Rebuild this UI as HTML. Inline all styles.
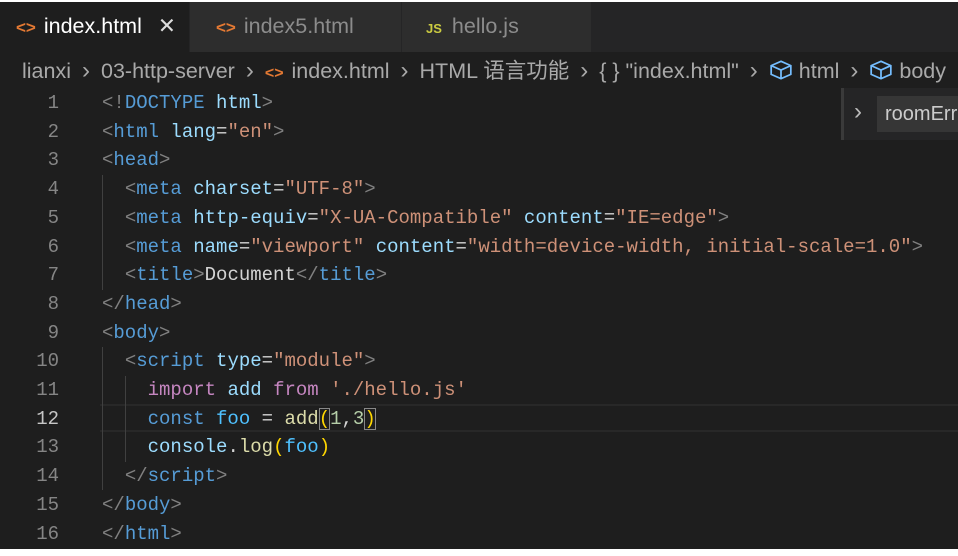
<!DOCTYPE html>
<html><head><style>
body{margin:0;width:958px;height:556px;background:#fff;overflow:hidden;position:relative;font-family:"Liberation Sans","Noto Sans CJK SC",sans-serif}
#ed{position:absolute;left:0;top:2px;width:958px;height:547px;background:#1e1e1e}
.tabs{position:absolute;top:0;left:0;width:958px;height:50px;background:#252526}
.tab{position:absolute;top:0;height:50px;line-height:48px;font-size:21.5px;color:#8c8c8c;background:#2d2d2d;border-right:1px solid #252526;box-sizing:border-box;white-space:nowrap}
.tab.a{background:#1e1e1e;color:#fff}
.ic{color:#e37933;font-size:17px;font-weight:bold;margin-right:8px}
.js{color:#cbcb41;font-size:13px;font-weight:bold;margin-right:10px}
.bc{position:absolute;top:52px;left:22px;font-size:21.5px;color:#a9a9a9;white-space:nowrap}
.bc .s{color:#a9a9a9;margin:0 11px 0 11px;font-size:24px}
.code{position:absolute;left:0;top:87px;font-family:"Liberation Mono",monospace;font-size:19px}
.ln{position:absolute;left:0;width:59px;text-align:right;color:#858585;height:28.7px;line-height:28.7px}
.cl{position:absolute;left:102px;white-space:pre;color:#d4d4d4;height:28.7px;line-height:28.7px}
.t{color:#808080}.n{color:#569cd6}.at{color:#9cdcfe}.st{color:#ce9178}.k{color:#c586c0}.v{color:#9cdcfe}.f{color:#dcdcaa}.num{color:#b5cea8}.b{color:#ffd700}
.g{position:absolute;width:1px;background:#404040}
</style></head><body><div id="ed">
<div class="tabs">
<div class="tab a" style="left:0;width:190px;padding-left:16px"><span class="ic">&lt;&gt;</span>index.html <span style="margin-left:10px;color:#ddd">✕</span></div>
<div class="tab" style="left:190px;width:212px;padding-left:26px"><span class="ic">&lt;&gt;</span>index5.html</div>
<div class="tab" style="left:402px;width:190px;padding-left:24px"><span class="js">JS</span>hello.js</div>
</div>
<div class="bc">lianxi<span class="s">›</span>03-http-server<span class="s">›</span><span class="ic" style="font-size:16px">&lt;&gt;</span>index.html<span class="s">›</span>HTML 语言功能<span class="s">›</span>{ } "index.html"<span class="s">›</span><svg width="24" height="22" viewBox="0 0 22 20" style="vertical-align:-3px"><path d="M11 2 L20 6 L20 14 L11 18 L2 14 L2 6 Z M2 6 L11 10 L20 6 M11 10 L11 18" fill="none" stroke="#75beff" stroke-width="1.6"/></svg> html<span class="s">›</span><svg width="24" height="22" viewBox="0 0 22 20" style="vertical-align:-3px"><path d="M11 2 L20 6 L20 14 L11 18 L2 14 L2 6 Z M2 6 L11 10 L20 6 M11 10 L11 18" fill="none" stroke="#75beff" stroke-width="1.6"/></svg> body</div>
<div style="position:absolute;left:841px;top:86px;width:117px;height:52px;background:#252526;border-left:3px solid #3a3a3a;box-sizing:border-box">
<span style="position:absolute;left:10px;top:10px;color:#bbb;font-size:24px">›</span>
<div style="position:absolute;left:33px;top:8px;width:90px;height:36px;background:#363636;color:#ccc;font-size:20px;line-height:36px;padding-left:8px">roomErr</div></div>
<div class="code">
<div style="position:absolute;left:100px;top:315px;width:858px;height:28px;border-top:2px solid #282828;border-bottom:2px solid #282828;box-sizing:border-box"></div>
<div class="g" style="left:102px;top:86px;height:115px"></div>
<div class="g" style="left:102px;top:258px;height:143px"></div>
<div class="g" style="left:125px;top:287px;height:86px"></div>
<div class="ln" style="top:0">1</div><div class="cl" style="top:0"><span class="t">&lt;!</span><span class="n">DOCTYPE</span> <span class="at">html</span><span class="t">&gt;</span></div>
<div class="ln" style="top:28.7px">2</div><div class="cl" style="top:28.7px"><span class="t">&lt;</span><span class="n">html</span> <span class="at">lang</span>=<span class="st">"en"</span><span class="t">&gt;</span></div>
<div class="ln" style="top:57.4px">3</div><div class="cl" style="top:57.4px"><span class="t">&lt;</span><span class="n">head</span><span class="t">&gt;</span></div>
<div class="ln" style="top:86.1px">4</div><div class="cl" style="top:86.1px">  <span class="t">&lt;</span><span class="n">meta</span> <span class="at">charset</span>=<span class="st">"UTF-8"</span><span class="t">&gt;</span></div>
<div class="ln" style="top:114.8px">5</div><div class="cl" style="top:114.8px">  <span class="t">&lt;</span><span class="n">meta</span> <span class="at">http-equiv</span>=<span class="st">"X-UA-Compatible"</span> <span class="at">content</span>=<span class="st">"IE=edge"</span><span class="t">&gt;</span></div>
<div class="ln" style="top:143.5px">6</div><div class="cl" style="top:143.5px">  <span class="t">&lt;</span><span class="n">meta</span> <span class="at">name</span>=<span class="st">"viewport"</span> <span class="at">content</span>=<span class="st">"width=device-width, initial-scale=1.0"</span><span class="t">&gt;</span></div>
<div class="ln" style="top:172.2px">7</div><div class="cl" style="top:172.2px">  <span class="t">&lt;</span><span class="n">title</span><span class="t">&gt;</span>Document<span class="t">&lt;/</span><span class="n">title</span><span class="t">&gt;</span></div>
<div class="ln" style="top:200.9px">8</div><div class="cl" style="top:200.9px"><span class="t">&lt;/</span><span class="n">head</span><span class="t">&gt;</span></div>
<div class="ln" style="top:229.6px">9</div><div class="cl" style="top:229.6px"><span class="t">&lt;</span><span class="n">body</span><span class="t">&gt;</span></div>
<div class="ln" style="top:258.3px">10</div><div class="cl" style="top:258.3px">  <span class="t">&lt;</span><span class="n">script</span> <span class="at">type</span>=<span class="st">"module"</span><span class="t">&gt;</span></div>
<div class="ln" style="top:287px">11</div><div class="cl" style="top:287px">    <span class="k">import</span> <span class="v">add</span> <span class="k">from</span> <span class="st">'./hello.js'</span></div>
<div class="ln" style="top:315.7px;color:#c6c6c6">12</div><div class="cl" style="top:315.7px">    <span class="n">const</span> <span class="v" style="color:#4fc1ff">foo</span> = <span class="f">add</span><span class="b" style="outline:1px solid #888;outline-offset:-1px">(</span><span class="num">1</span>,<span class="num">3</span><span class="b" style="outline:1px solid #888;outline-offset:-1px">)</span></div>
<div class="ln" style="top:344.4px">13</div><div class="cl" style="top:344.4px">    <span class="v">console</span>.<span class="f">log</span><span class="b">(</span><span class="v" style="color:#4fc1ff">foo</span><span class="b">)</span></div>
<div class="ln" style="top:373.1px">14</div><div class="cl" style="top:373.1px">  <span class="t">&lt;/</span><span class="n">script</span><span class="t">&gt;</span></div>
<div class="ln" style="top:401.8px">15</div><div class="cl" style="top:401.8px"><span class="t">&lt;/</span><span class="n">body</span><span class="t">&gt;</span></div>
<div class="ln" style="top:430.5px">16</div><div class="cl" style="top:430.5px"><span class="t">&lt;/</span><span class="n">html</span><span class="t">&gt;</span></div>
</div></div></body></html>
